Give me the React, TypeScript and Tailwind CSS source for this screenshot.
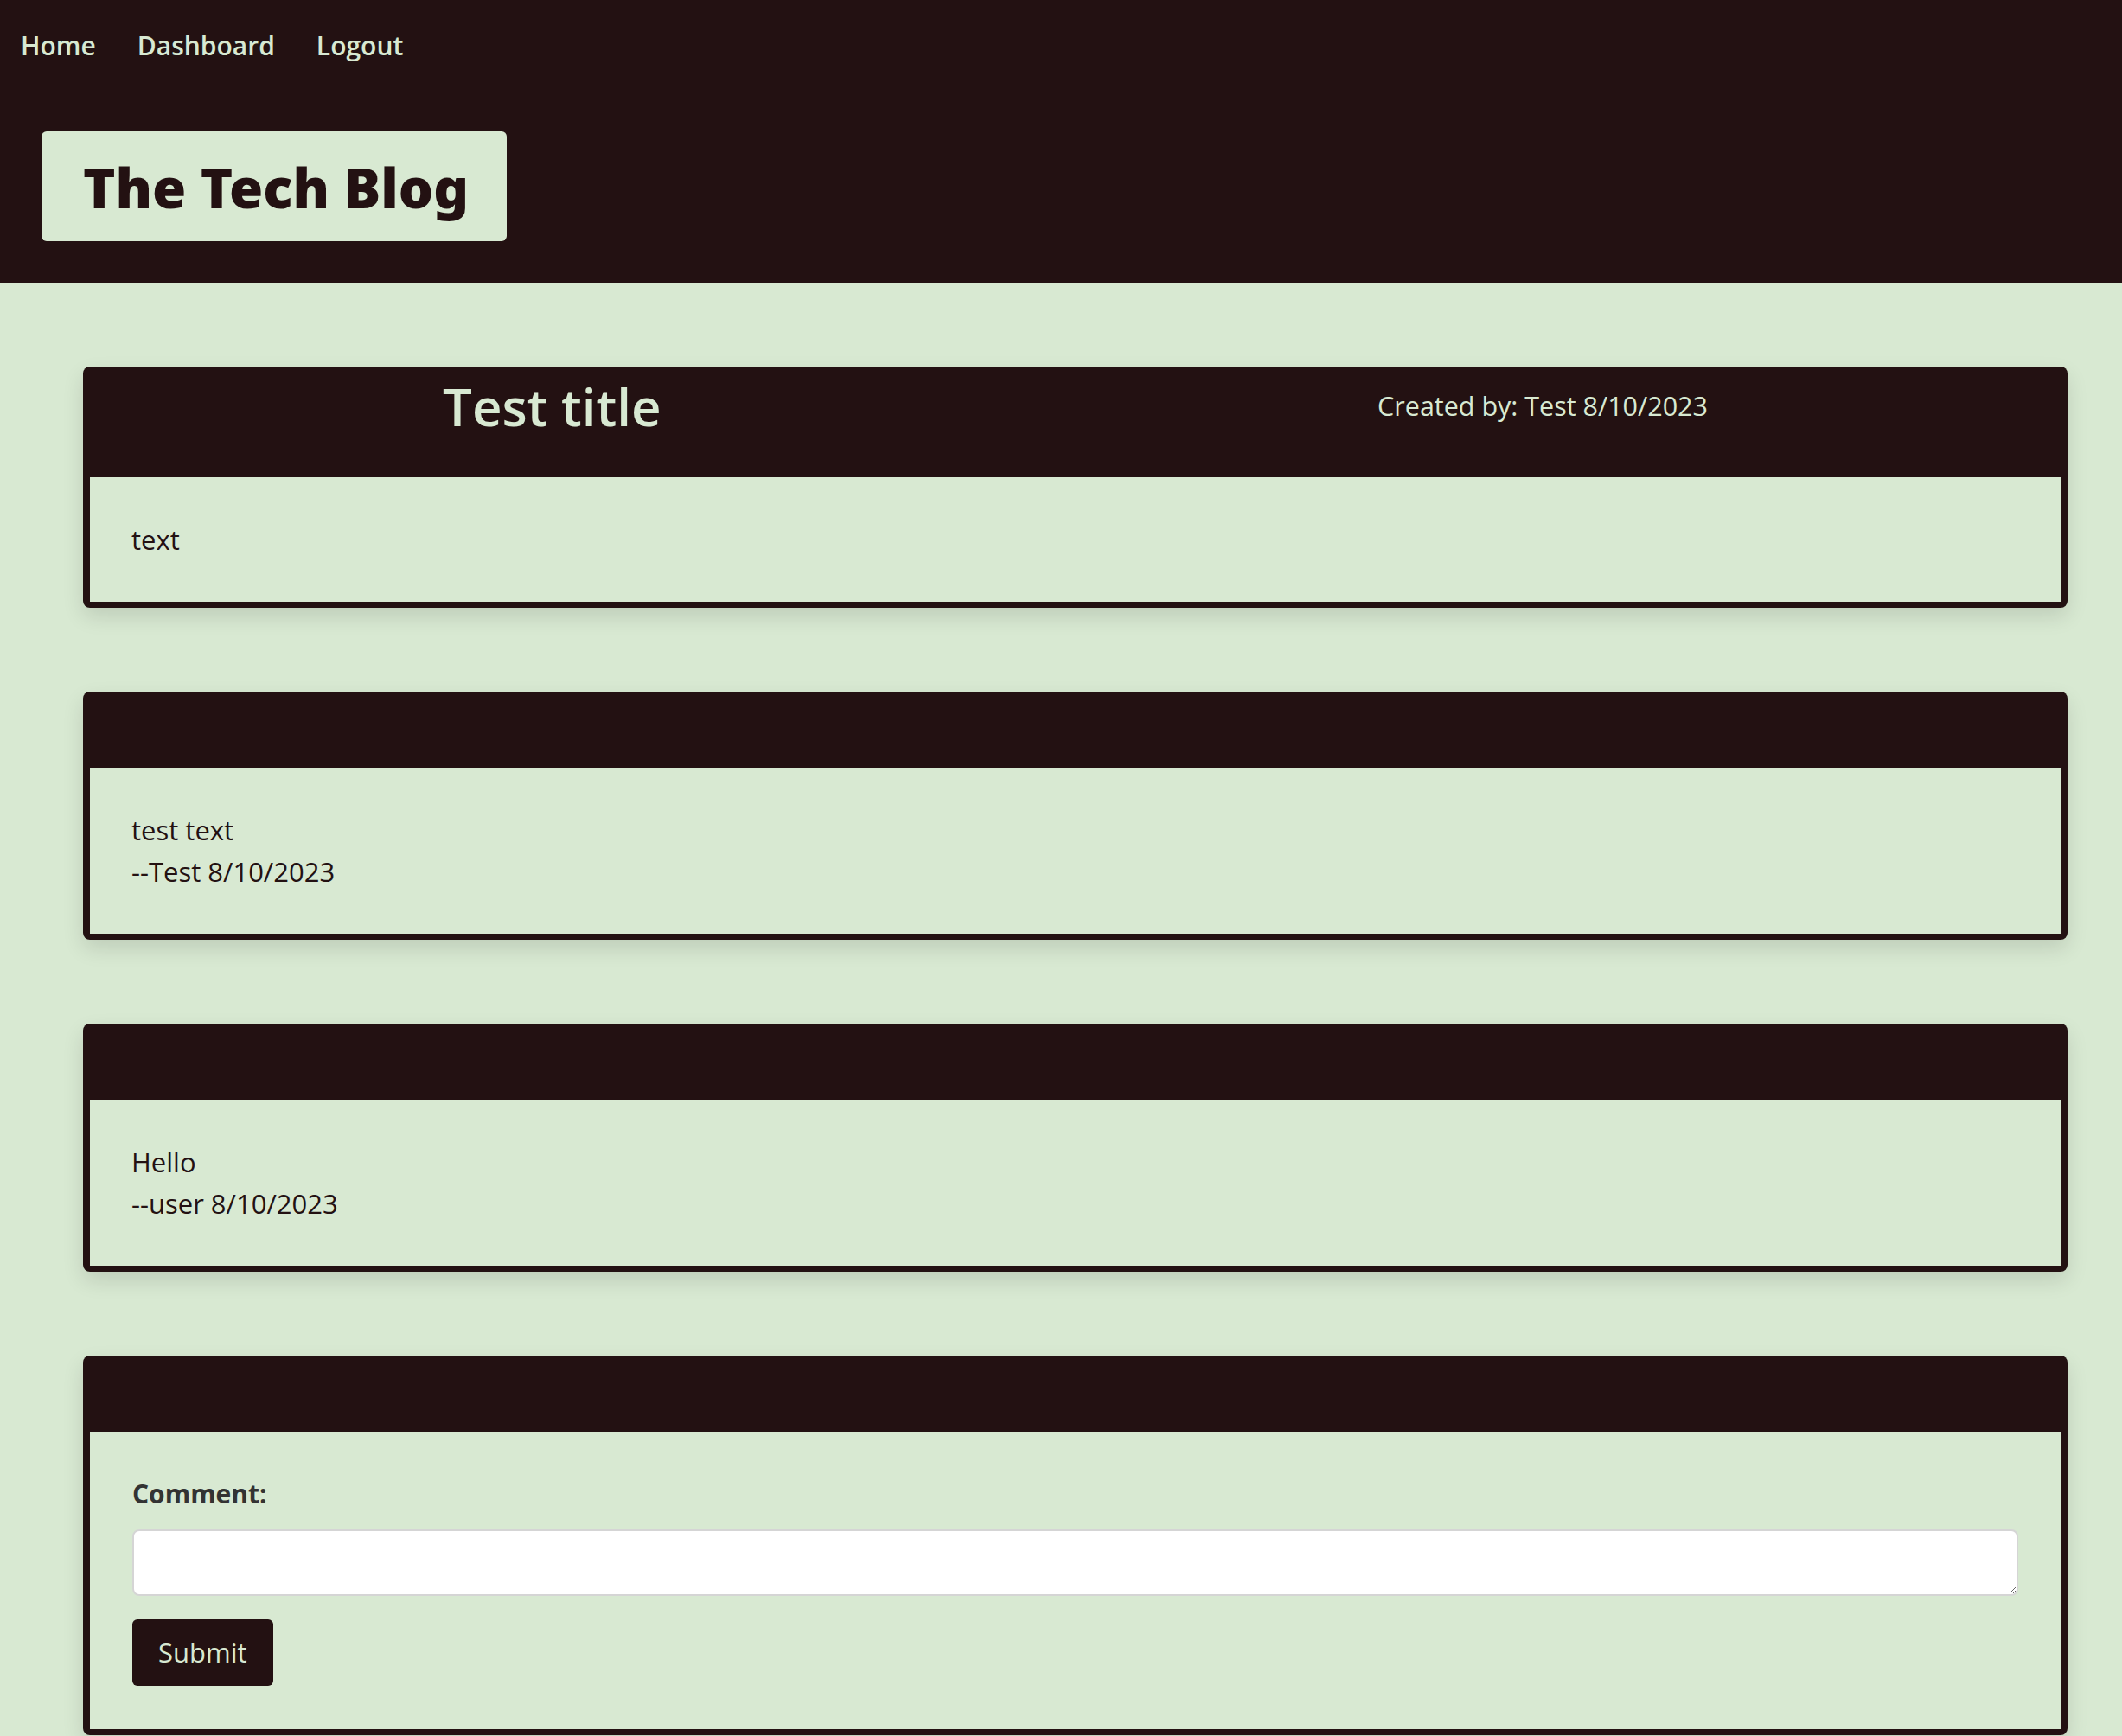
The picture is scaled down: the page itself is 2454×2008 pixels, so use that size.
import React from "react";

function Card({ header, children }: { header?: React.ReactNode; children: React.ReactNode }) {
  return (
    <div className="flex flex-col rounded-[8px] bg-[#231112] px-[8px] pb-[7px] shadow-[0_10px_24px_rgba(0,0,0,0.12)]">
      {header ?? <div className="h-[88px]" />}
      <div className="bg-[#d8e9d2] px-[48px] py-[48px] text-[31px] leading-[48px] text-[#231112]">{children}</div>
    </div>
  );
}

export default function App() {
  return (
    <div className="min-h-[2008px] bg-[#d8e9d2] font-['Open_Sans',sans-serif]">
      <header className="bg-[#231112] pb-[48px]">
        <nav className="flex gap-[48px] pl-[24px] pt-[29px] text-[30px] font-semibold leading-[48px] text-[#d8e9d2]">
          <a>Home</a>
          <a>Dashboard</a>
          <a>Logout</a>
        </nav>
        <div className="ml-[48px] mt-[75px] inline-block h-[127px] rounded-[6px] bg-[#d8e9d2] pl-[48px] pr-[44px] pt-[32px] font-['Noto_Sans',sans-serif] text-[63.5px] font-black leading-[66px] text-[#231112]">
          The Tech Blog
        </div>
      </header>

      <main className="flex flex-col gap-[97px] pl-[96px] pr-[63px] pt-[97px]">
        <Card
          header={
            <div className="flex h-[128px] items-start justify-between px-[408px] text-[#d8e9d2]">
              <h2 className="mt-[15px] text-[60px] font-semibold leading-[62px]">Test title</h2>
              <p className="mt-[29px] text-[30.5px] leading-[33px]">Created by: Test 8/10/2023</p>
            </div>
          }
        >
          <p>text</p>
        </Card>

        <Card>
          <p>test text</p>
          <p>--Test 8/10/2023</p>
        </Card>

        <Card>
          <p>Hello</p>
          <p>--user 8/10/2023</p>
        </Card>

        <div className="flex flex-col rounded-[8px] bg-[#231112] px-[8px] pb-[7px] shadow-[0_10px_24px_rgba(0,0,0,0.12)]">
          <div className="h-[88px]" />
          <div className="flex flex-col items-start bg-[#d8e9d2] px-[49px] pb-[50px] pt-[48px]">
            <label className="text-[30px] font-bold leading-[48px] text-[#333333]">Comment:</label>
            <textarea className="mt-[17px] h-[77px] w-full rounded-[8px] border-2 border-[#d5d5d5] bg-white px-3 text-[31px]" />
            <button className="mt-[27px] h-[77px] rounded-[6px] bg-[#231112] px-[30px] text-[31px] text-[#d8e9d2]">
              Submit
            </button>
          </div>
        </div>
      </main>
    </div>
  );
}
